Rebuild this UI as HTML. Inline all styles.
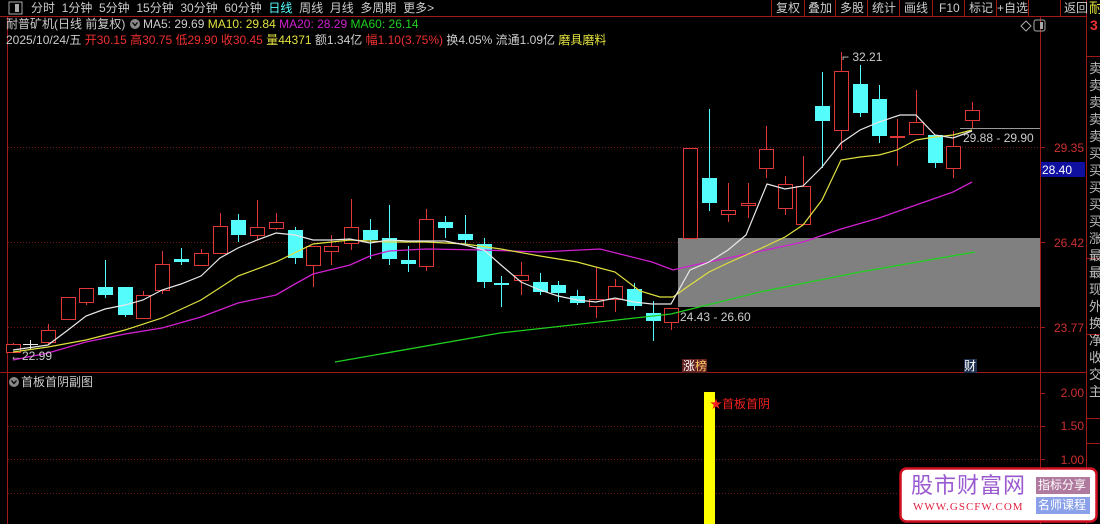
<!DOCTYPE html>
<html><head><meta charset="utf-8"><style>
html,body{margin:0;padding:0;background:#000;width:1100px;height:524px;overflow:hidden;font-family:"Liberation Sans","Noto Sans CJK SC",sans-serif;}
.t{position:absolute;white-space:nowrap;font-size:12px;line-height:14px;}
.ax{position:absolute;right:16px;white-space:nowrap;font-size:12px;line-height:14px;color:#d03030;text-align:right;}
</style></head><body>
<svg id="s" width="1100" height="524" style="position:absolute;left:0;top:0" xmlns="http://www.w3.org/2000/svg">
<line x1="0" y1="16.5" x2="1087" y2="16.5" stroke="#a01818"/>
<line x1="7.5" y1="17" x2="7.5" y2="524" stroke="#a01818"/>
<line x1="1040.5" y1="17" x2="1040.5" y2="524" stroke="#a01818"/>
<line x1="1086.5" y1="0" x2="1086.5" y2="524" stroke="#a01818"/>
<line x1="0" y1="372.5" x2="1087" y2="372.5" stroke="#a01818"/>
<g stroke="#a01818">
<line x1="771.5" y1="0" x2="771.5" y2="16"/><line x1="804.5" y1="0" x2="804.5" y2="16"/><line x1="835.5" y1="0" x2="835.5" y2="16"/><line x1="867.5" y1="0" x2="867.5" y2="16"/><line x1="899.5" y1="0" x2="899.5" y2="16"/><line x1="932.5" y1="0" x2="932.5" y2="16"/><line x1="964.5" y1="0" x2="964.5" y2="16"/><line x1="996.5" y1="0" x2="996.5" y2="16"/><line x1="1028.5" y1="0" x2="1028.5" y2="16"/><line x1="1060.5" y1="0" x2="1060.5" y2="16"/>
<line x1="1087" y1="56.5" x2="1100" y2="56.5"/><line x1="1087" y1="258.5" x2="1100" y2="258.5"/><line x1="1087" y1="334.5" x2="1100" y2="334.5"/><line x1="1087" y1="418.5" x2="1100" y2="418.5"/><line x1="1087" y1="443.5" x2="1100" y2="443.5"/>
</g>
<g stroke="#701818" stroke-dasharray="1,2">
<line x1="8" y1="147.5" x2="1040" y2="147.5"/><line x1="8" y1="242.5" x2="1040" y2="242.5"/><line x1="8" y1="327.5" x2="1040" y2="327.5"/>
<line x1="8" y1="426.5" x2="1040" y2="426.5"/><line x1="8" y1="459.5" x2="1040" y2="459.5"/><line x1="8" y1="493.5" x2="1040" y2="493.5"/>
</g>
<g stroke="#a01818"><line x1="1040" y1="147.5" x2="1045" y2="147.5"/><line x1="1040" y1="242.5" x2="1045" y2="242.5"/><line x1="1040" y1="327.5" x2="1045" y2="327.5"/><line x1="1040" y1="393.5" x2="1045" y2="393.5"/><line x1="1040" y1="426.5" x2="1045" y2="426.5"/><line x1="1040" y1="459.5" x2="1045" y2="459.5"/><line x1="1040" y1="493.5" x2="1045" y2="493.5"/></g>
<rect x="678" y="238" width="362" height="69" fill="#808080"/>
<line x1="960" y1="128.5" x2="1040" y2="128.5" stroke="#999"/>
<g id="cd"></g>
<polyline fill="none" stroke="#20d020" stroke-width="1.3" points="335,362 500,333 671,314 760,292 860,272 975,252"/>
<polyline fill="none" stroke="#d020d0" stroke-width="1.3" points="13,360 48,353 86,342 125,334 162,328 201,317 238,303 276,295 295,284 313,274 350,265 370,256 389,251 426,249 484,250 540,252 600,249 652,262 673,270 690,266 728,258 766,250 803,242 841,229 879,218 916,205 953,192 972,182"/>
<polyline fill="none" stroke="#e0e040" stroke-width="1.2" points="13,352 48,347 86,340 125,330 162,318 201,300 238,276 276,262 313,244 350,240 389,242 426,242 465,244 501,249 540,256 577,262 615,272 640,291 660,297 673,297 690,285 709,272 728,263 746,255 766,246 785,237 803,225 822,200 841,160 860,157 879,155 897,150 916,140 935,137 953,135 972,130"/>
<polyline fill="none" stroke="#e8e8e8" stroke-width="1.2" points="13,350 48,345 68,330 86,316 105,309 125,305 143,300 162,290 181,284 201,276 220,258 238,248 257,240 276,233 295,235 313,240 331,240 350,239 370,243 389,240 408,241 426,241 445,241 465,245 484,250 501,265 521,282 540,290 558,296 577,300 596,302 615,298 634,302 652,304 671,304 690,270 709,262 728,250 746,235 767,184 785,189 803,186 822,167 841,143 860,130 879,122 900,115 916,115 935,135 953,138 972,131"/>
<rect x="704" y="392" width="11" height="132" fill="#ffff00"/>
<circle cx="14" cy="382" r="5" fill="#888"/><path d="M11.5 380.5 L14 383.5 L16.5 380.5" stroke="#000" fill="none" stroke-width="1.3"/>
<circle cx="135" cy="24" r="5" fill="#888"/><path d="M132.5 22.5 L135 25.5 L137.5 22.5" stroke="#000" fill="none" stroke-width="1.3"/>
<rect x="9" y="2" width="13" height="12" fill="none" stroke="#aaa"/><rect x="15" y="4" width="4" height="8" fill="#aaa"/>
<path d="M1026 21 L1031 26 L1026 31 L1021 26 Z" fill="none" stroke="#aaa"/>
<rect x="1034" y="20" width="11" height="11" rx="2" fill="none" stroke="#aaa"/><rect x="1040" y="22" width="3" height="7" fill="#aaa"/>
<rect x="1041" y="162" width="44" height="15" fill="#1010a0"/>
<rect x="900.5" y="468.5" width="196" height="53" rx="6" fill="#fff" stroke="#d01020" stroke-width="2.5"/>
<rect x="1036" y="477" width="54" height="17" fill="#b07a9e"/><rect x="1036" y="497" width="54" height="17" fill="#8aa0e8"/>
<rect x="682" y="359" width="25" height="14" fill="#602020"/><rect x="964" y="359" width="13" height="14" fill="#203050"/>
</svg>
<script>
var C=[[13,'r',344,352,343,353],[30,'w',344,345,340,350],[48,'r',330,342,324,344],[68,'r',297,319,297,319],[86,'r',288,302,288,305],[105,'c',287,295,260,298],[125,'c',287,315,287,317],[143,'r',295,318,291,318],[162,'r',264,290,251,294],[181,'c',259,262,248,265],[201,'r',253,265,249,266],[220,'r',226,253,213,253],[238,'c',220,235,214,242],[257,'r',227,235,200,240],[276,'r',222,228,213,230],[295,'c',230,258,227,264],[313,'r',246,265,246,287],[331,'r',246,251,235,265],[351,'r',227,243,199,250],[370,'c',230,240,219,259],[389,'c',238,259,205,265],[408,'c',260,264,246,272],[426,'r',219,266,209,271],[445,'c',222,228,216,238],[465,'c',234,240,215,245],[484,'c',244,282,238,288],[501,'c',283,284,276,307],[521,'r',275,280,262,295],[540,'c',282,292,273,295],[558,'c',285,293,281,302],[577,'c',296,303,290,305],[596,'r',299,306,267,318],[615,'r',286,299,279,312],[634,'c',289,306,283,310],[653,'c',313,321,301,341],[671,'r',308,322,308,330],[690,'r',148,238,148,238],[709,'c',178,203,109,211],[728,'r',210,214,183,222],[748,'r',203,205,183,218],[766,'r',149,168,126,178],[785,'r',184,208,176,215],[803,'r',186,224,156,224],[822,'c',106,121,72,168],[841,'r',71,130,52,150],[860,'c',84,113,65,117],[879,'c',99,136,85,143],[897,'r',136,137,119,166],[916,'r',122,134,90,135],[935,'c',135,163,135,168],[953,'r',146,168,131,178],[972,'r',110,120,102,128]];
var h='';C.forEach(function(c){var x=c[0],t=c[1],col=t=='r'?'#e03838':t=='c'?'#54fcfc':'#e8e8e8';
h+='<line x1="'+(x+.5)+'" y1="'+c[4]+'" x2="'+(x+.5)+'" y2="'+c[5]+'" stroke="'+col+'"/>';
if(t=='r')h+='<rect x="'+(x-6.5)+'" y="'+(c[2]+.5)+'" width="14" height="'+Math.max(1,c[3]-c[2])+'" fill="#000" stroke="'+col+'"/>';
else if(t=='c')h+='<rect x="'+(x-7)+'" y="'+c[2]+'" width="15" height="'+Math.max(2,c[3]-c[2])+'" fill="'+col+'"/>';
else h+='<line x1="'+(x-7)+'" y1="344.5" x2="'+(x+8)+'" y2="344.5" stroke="'+col+'"/>';});
document.getElementById('cd').innerHTML=h;
</script>
<div class="t" style="left:31px;top:1px;color:#ccc">分时&nbsp;&nbsp;1分钟&nbsp;&nbsp;5分钟&nbsp;&nbsp;15分钟&nbsp;&nbsp;30分钟&nbsp;&nbsp;60分钟&nbsp;&nbsp;<span style="color:#5ff">日线</span>&nbsp;&nbsp;周线&nbsp;&nbsp;月线&nbsp;&nbsp;多周期&nbsp;&nbsp;更多&gt;</div>
<div class="t" style="left:776px;top:1px;color:#ccc">复权</div><div class="t" style="left:808px;top:1px;color:#ccc">叠加</div><div class="t" style="left:840px;top:1px;color:#ccc">多股</div><div class="t" style="left:872px;top:1px;color:#ccc">统计</div><div class="t" style="left:904px;top:1px;color:#ccc">画线</div><div class="t" style="left:939px;top:1px;color:#ccc">F10</div><div class="t" style="left:969px;top:1px;color:#ccc">标记</div><div class="t" style="left:997px;top:1px;color:#ccc">+自选</div><div class="t" style="left:1064px;top:1px;color:#ccc">返回</div>
<div class="t" style="left:6px;top:17px;color:#ccc">耐普矿机(日线 前复权)</div>
<div class="t" style="left:143px;top:17px;color:#ccc">MA5: 29.69 <span style="color:#e0e040">MA10: 29.84</span> <span style="color:#d020d0">MA20: 28.29</span> <span style="color:#20d020">MA60: 26.14</span></div>
<div class="t" style="left:6px;top:33px;color:#ccc">2025/10/24/五 <span style="color:#f03030">开30.15 高30.75 低29.90 收30.45</span> <span style="color:#e0e040">量44371</span> 额1.34亿 <span style="color:#f03030">幅1.10(3.75%)</span> 换4.05% 流通1.09亿 <span style="color:#e0e040">磨具磨料</span></div>
<div class="t" style="left:842px;top:50px;color:#ccc">⌐ 32.21</div>
<div class="t" style="left:963px;top:131px;color:#ccc">29.88 - 29.90</div>
<div class="t" style="left:680px;top:310px;color:#ccc">24.43 - 26.60</div>
<div class="t" style="left:10px;top:349px;color:#ccc">←22.99</div>
<div class="t" style="left:683px;top:359px;color:#fff">涨<span style="color:#fc6">榜</span></div>
<div class="t" style="left:964px;top:359px;color:#fff">财</div>
<div class="t" style="left:21px;top:375px;color:#ccc">首板首阴副图</div>
<div class="t" style="left:710px;top:397px;color:#f02020">★首板首阴</div>
<div class="ax" style="top:141px">29.35</div>
<div class="t" style="left:1042px;top:163px;color:#fff">28.40</div>
<div class="ax" style="top:236px">26.42</div>
<div class="ax" style="top:321px">23.77</div>
<div class="ax" style="top:386px">2.00</div>
<div class="ax" style="top:419px">1.50</div>
<div class="ax" style="top:453px">1.00</div>
<div class="t" style="left:1089px;top:1px;color:#e0e040;font-size:14px">耐</div>
<div class="t" style="left:1090px;top:18px;color:#f03030;font-size:14px;font-weight:bold">3</div>
<div class="t" style="left:1089px;top:60px;color:#bbb;font-size:13px;line-height:17px;width:11px;white-space:normal">卖卖卖卖卖买买买买买涨最最现外换净收交主</div>
<div class="t" style="left:911px;top:473px;font-size:22px;line-height:26px;color:#9a5ad0;letter-spacing:1px">股市财富网</div>
<div class="t" style="left:913px;top:500px;font-family:'Liberation Serif',serif;font-size:11px;color:#e02040;letter-spacing:1px">WWW.GSCFW.COM</div>
<div class="t" style="left:1038px;top:478px;color:#fff;font-size:12px">指标分享</div>
<div class="t" style="left:1038px;top:498px;color:#fff;font-size:12px">名师课程</div>
</body></html>
